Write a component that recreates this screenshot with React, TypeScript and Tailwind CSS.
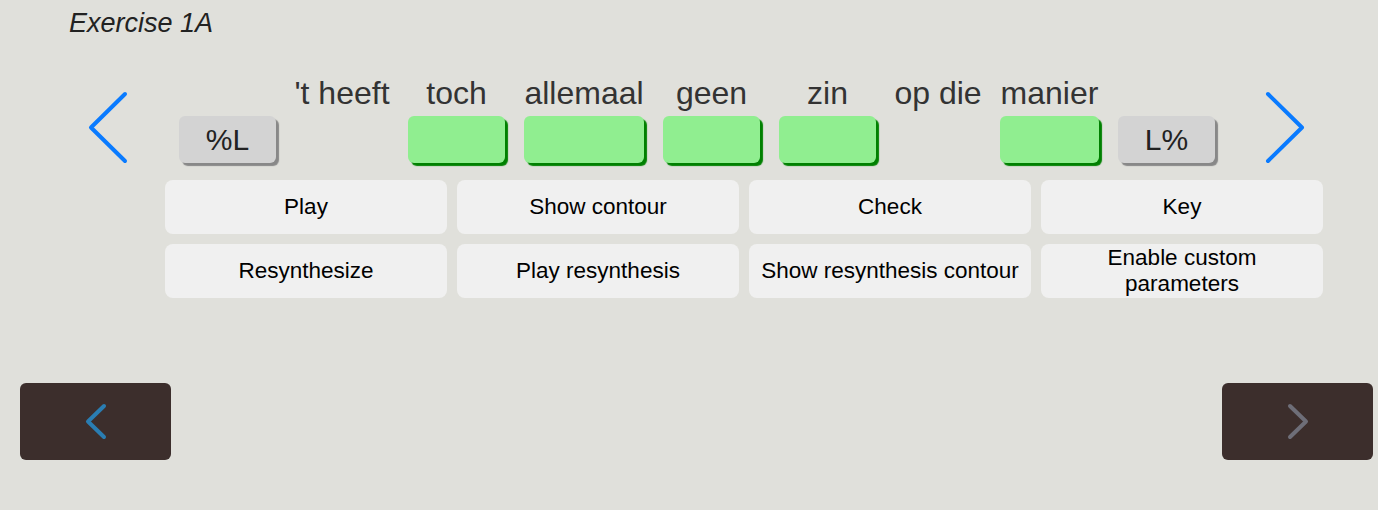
import React from "react";

type Slot = { word?: string; box?: "green" | "gray"; label?: string; w: string };

// Column widths are fixed so words and answer boxes line up in one table-like row.
const slots: Slot[] = [
  { box: "gray", label: "%L", w: "w-[97px]" },
  { word: "'t heeft", w: "w-[94px]" },
  { word: "toch", box: "green", w: "w-[97px]" },
  { word: "allemaal", box: "green", w: "w-[120px]" },
  { word: "geen", box: "green", w: "w-[97px]" },
  { word: "zin", box: "green", w: "w-[97px]" },
  { word: "op die", w: "w-[86px]" },
  { word: "manier", box: "green", w: "w-[99px]" },
  { box: "gray", label: "L%", w: "w-[97px]" },
];

const actions = [
  "Play",
  "Show contour",
  "Check",
  "Key",
  "Resynthesize",
  "Play resynthesis",
  "Show resynthesis contour",
  "Enable custom parameters",
];

function BigChevron({ dir }: { dir: "left" | "right" }) {
  const d = dir === "left" ? "M39 4 L5 37.5 L39 71" : "M6 4 L40 37.5 L6 71";
  return (
    <svg width="44" height="76" viewBox="0 0 44 76" className="block shrink-0">
      <path d={d} fill="none" stroke="#0a7bff" strokeWidth="4" strokeLinecap="round" strokeLinejoin="round" />
    </svg>
  );
}

function SmallChevron({ dir, color }: { dir: "left" | "right"; color: string }) {
  const d = dir === "left" ? "M20 3 L4 18.5 L20 34" : "M4 3 L20 18.5 L4 34";
  return (
    <svg width="24" height="38" viewBox="0 0 24 38" className="block">
      <path d={d} fill="none" stroke={color} strokeWidth="4" strokeLinecap="round" strokeLinejoin="round" />
    </svg>
  );
}

function SlotColumn({ slot }: { slot: Slot }) {
  return (
    <div className={`flex shrink-0 flex-col items-stretch ${slot.w}`}>
      <div className="flex h-[36px] justify-center whitespace-nowrap text-[32px] leading-[36px] text-[#333]">
        {slot.word ?? ""}
      </div>
      <div className="mt-[5px] h-[47px]">
        {slot.box === "green" && (
          <div className="h-[47px] rounded-[6px] bg-[#90ee90] shadow-[3px_3px_1px_#008000]" />
        )}
        {slot.box === "gray" && (
          <div className="flex h-[47px] items-center justify-center rounded-[6px] bg-[#d3d3d3] text-[30px] leading-none text-[#222] shadow-[3px_3px_1px_#888888]">
            {slot.label}
          </div>
        )}
      </div>
    </div>
  );
}

export default function App() {
  return (
    <div className="min-h-[510px] w-full bg-[#e0e0db] font-['Liberation_Sans',Arial,sans-serif]">
      <div className="pl-[69px] pt-[8px] text-[27px] italic leading-[30px] text-[#222]">Exercise 1A</div>

      <div className="mt-[37px] flex items-start">
        <div className="ml-[86px] mt-[15px]">
          <BigChevron dir="left" />
        </div>
        <div className="ml-[49px] flex gap-[19px]">
          {slots.map((s, i) => (
            <SlotColumn key={i} slot={s} />
          ))}
        </div>
        <div className="ml-[47px] mt-[15px]">
          <BigChevron dir="right" />
        </div>
      </div>

      <div className="ml-[165px] mt-[14px] grid w-[1158px] grid-cols-4 gap-[10px]">
        {actions.map((a) => (
          <button
            key={a}
            className="flex h-[54px] items-center justify-center rounded-[8px] bg-[#f0f0f0] px-[8px] text-center text-[22.5px] leading-[26px] text-black"
          >
            {a === "Enable custom parameters" ? (
              <span>
                Enable custom
                <br />
                parameters
              </span>
            ) : (
              a
            )}
          </button>
        ))}
      </div>

      <div className="mt-[85px] flex justify-between pb-[50px]">
        <button className="ml-[20px] flex h-[77px] w-[151px] items-center justify-center rounded-[6px] bg-[#3c2e2c]">
          <SmallChevron dir="left" color="#2a7db2" />
        </button>
        <button className="mr-[5px] flex h-[77px] w-[151px] items-center justify-center rounded-[6px] bg-[#3c2e2c]">
          <SmallChevron dir="right" color="#6e6e78" />
        </button>
      </div>
    </div>
  );
}
